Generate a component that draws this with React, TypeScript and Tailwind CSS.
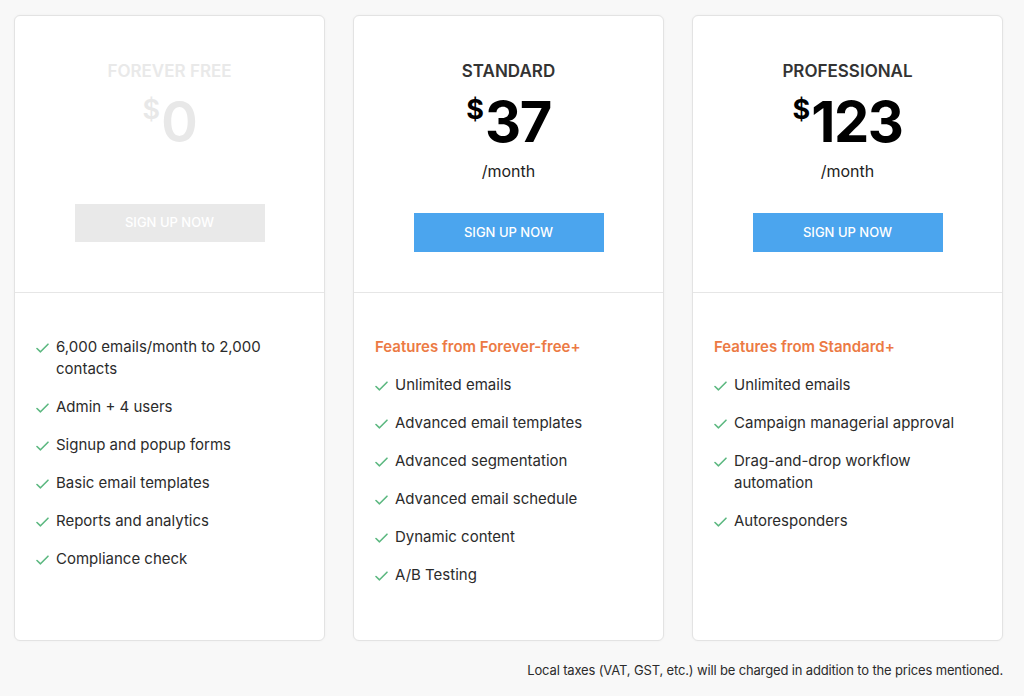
import React from "react";

const Check = () => (
  <svg width="13" height="10" viewBox="0 0 13 10" className="shrink-0 mt-[7px]">
    <polyline points="1,5.5 4.5,8.8 12,1.2" fill="none" stroke="#5cb880" strokeWidth="1.6" strokeLinecap="round" strokeLinejoin="round" />
  </svg>
);

const Item = ({ children }: { children: React.ReactNode }) => (
  <li className="flex gap-[7px] text-[15px] leading-[22px] text-[#2b2b2b]">
    <Check />
    <span>{children}</span>
  </li>
);

type Plan = {
  name: string;
  price: string;
  faded?: boolean;
  heading?: string;
  items: string[];
};

const plans: Plan[] = [
  {
    name: "FOREVER FREE",
    price: "0",
    faded: true,
    items: [
      "6,000 emails/month to 2,000 contacts",
      "Admin + 4 users",
      "Signup and popup forms",
      "Basic email templates",
      "Reports and analytics",
      "Compliance check",
    ],
  },
  {
    name: "STANDARD",
    price: "37",
    heading: "Features from Forever-free+",
    items: [
      "Unlimited emails",
      "Advanced email templates",
      "Advanced segmentation",
      "Advanced email schedule",
      "Dynamic content",
      "A/B Testing",
    ],
  },
  {
    name: "PROFESSIONAL",
    price: "123",
    heading: "Features from Standard+",
    items: [
      "Unlimited emails",
      "Campaign managerial approval",
      "Drag-and-drop workflow automation",
      "Autoresponders",
    ],
  },
];

const Card = ({ plan }: { plan: Plan }) => {
  const f = plan.faded;
  return (
    <div className="w-[311px] h-[626px] bg-white border border-[#e3e3e3] rounded-[6px] shadow-[0_0_3px_rgba(0,0,0,0.04)] flex flex-col">
      <div className="h-[277px] border-b border-[#e6e6e6] flex flex-col items-center pt-[43px]">
        <div className={`text-[17px] leading-[24px] font-semibold ${f ? "text-[#e9e9e9]" : "text-[#333333]"}`}>
          {plan.name}
        </div>
        <div className={`mt-[11px] flex items-start h-[56px] ${f ? "text-[#e8e8e8]" : "text-black"}`}>
          <span className={`text-[27px] leading-none mt-[2px] mr-[1px] ${f ? "font-semibold" : "font-bold"}`}>$</span>
          <span className={`text-[56px] leading-[56px] tracking-[-1.5px] ${f ? "font-semibold" : "font-bold"}`}>{plan.price}</span>
        </div>
        {!f && <div className="mt-[9px] text-[16px] leading-[24px] text-[#222]">/month</div>}
        <div
          className={`${f ? "mt-[54px] h-[38px] bg-[#e9e9e9]" : "mt-[30px] h-[39px] bg-[#4ba5ee]"} w-[190px] flex items-center justify-center text-white text-[13px] font-medium`}
        >
          SIGN UP NOW
        </div>
      </div>
      <div className="pl-[21px] pr-[16px] pt-[43px]">
        <ul className="flex flex-col gap-[16px]">
          {plan.heading && (
            <li className="text-[15px] leading-[22px] font-semibold text-[#ec7a44]">{plan.heading}</li>
          )}
          {plan.items.map((it) => (
            <Item key={it}>{it}</Item>
          ))}
        </ul>
      </div>
    </div>
  );
};

export default function App() {
  return (
    <div
      className="w-[1024px] h-[696px] bg-[#f8f8f8] overflow-hidden"
      style={{ fontFamily: "Inter, 'Noto Sans', sans-serif" }}
    >
      <div className="flex gap-[28px] pl-[14px] pt-[15px]">
        {plans.map((p) => (
          <Card key={p.name} plan={p} />
        ))}
      </div>
      <div className="flex justify-end pr-[21px] mt-[20px]">
        <p className="text-[13px] leading-[18px] tracking-[-0.15px] text-[#2b2b2b]">
          Local taxes (VAT, GST, etc.) will be charged in addition to the prices mentioned.
        </p>
      </div>
    </div>
  );
}
